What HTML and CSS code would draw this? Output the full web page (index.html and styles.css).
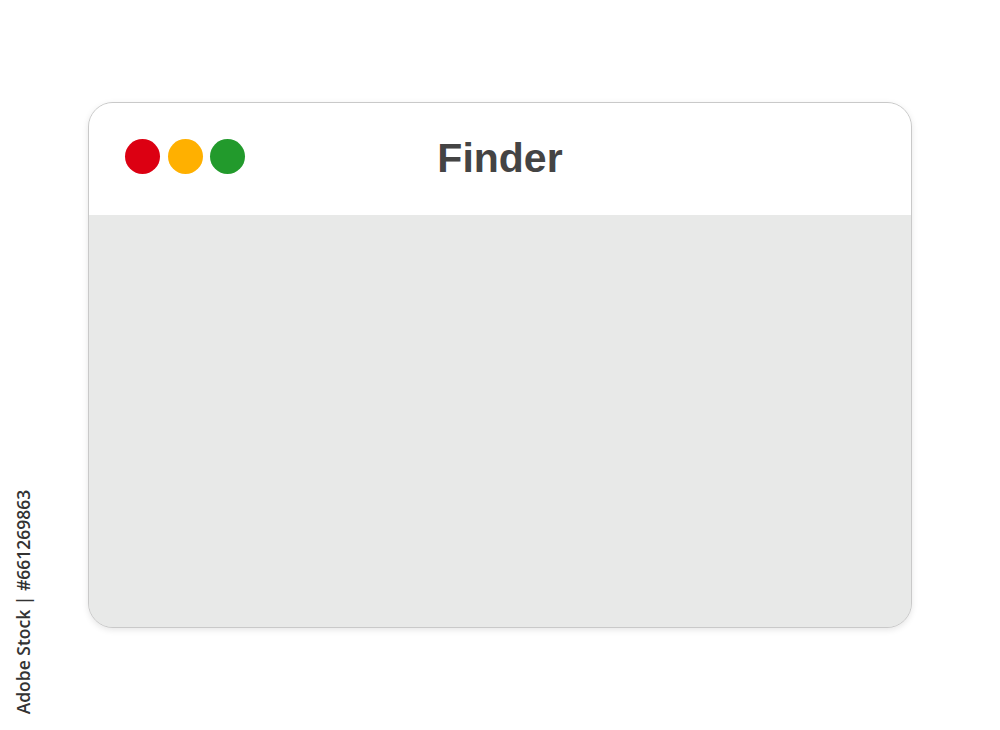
FILE: index.html
```html
<!DOCTYPE html>
<html lang="en">
<head>
<meta charset="utf-8">
<title>Finder</title>
<link rel="stylesheet" href="styles.css">
</head>
<body>
<div class="window">
  <div class="titlebar">
    <div class="lights">
      <span class="light red"></span>
      <span class="light yellow"></span>
      <span class="light green"></span>
    </div>
    <div class="title">Finder</div>
    <div class="spacer"></div>
  </div>
  <div class="content"></div>
</div>
<div class="credit">Adobe Stock | #661269863</div>
</body>
</html>
```
FILE: styles.css
```css
html, body {
  margin: 0;
  padding: 0;
  background: #ffffff;
}
body {
  width: 1000px;
  height: 730px;
  position: relative;
  overflow: hidden;
  padding-top: 102px;
  box-sizing: border-box;
}
.window {
  margin-left: 88px;
  width: 824px;
  height: 526px;
  box-sizing: border-box;
  border: 1px solid #c9c9c9;
  border-radius: 25px;
  overflow: hidden;
  display: flex;
  flex-direction: column;
  box-shadow: 0 2px 6px rgba(0, 0, 0, 0.10);
  background: #e8e9e8;
}
.titlebar {
  height: 112px;
  background: #ffffff;
  display: grid;
  grid-template-columns: 1fr auto 1fr;
  align-items: center;
  padding: 0 36px;
  box-sizing: border-box;
}
.lights {
  display: flex;
  gap: 7.5px;
  margin-top: -5px;
}
.light {
  width: 35px;
  height: 35px;
  border-radius: 50%;
  display: block;
}
.red { background: #dc0012; }
.yellow { background: #ffb000; }
.green { background: #229a2c; }
.title {
  font-family: "Liberation Sans", Arial, sans-serif;
  font-weight: bold;
  font-size: 41px;
  color: #444444;
  margin-top: -2px;
}
.content {
  flex: 1;
  background: #e8e9e8;
}
.credit {
  position: absolute;
  left: 23px;
  top: 602px;
  transform: translate(-50%, -50%) rotate(-90deg);
  font-family: "Open Sans", sans-serif;
  font-weight: 600;
  font-size: 17.5px;
  color: #333333;
  white-space: nowrap;
}
```
